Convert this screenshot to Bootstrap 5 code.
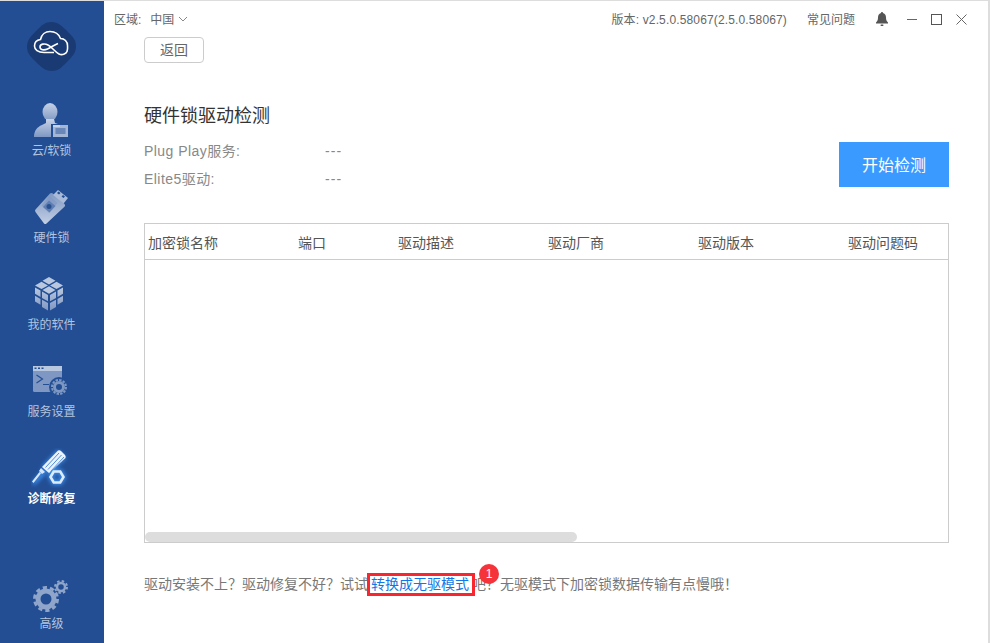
<!DOCTYPE html>
<html lang="zh">
<head>
<meta charset="utf-8">
<title>诊断修复</title>
<link rel="stylesheet" href="https://cdn.jsdelivr.net/npm/bootstrap@5.3.0/dist/css/bootstrap.min.css">
<style>
html,body{height:643px;overflow:hidden;background:#fff}
body{font-family:"Liberation Sans","Noto Sans CJK SC",sans-serif;font-size:12px;color:#666}
.app-shell{height:643px;border-top:1px solid #ddd;border-right:2px solid #ddd;margin-right:1px}
.side-rail{width:104px;background:#234e94;padding:21px 1px 0 0;height:100%}
.logo-mark{width:49px;height:49px;display:block;margin-bottom:29px}
.rail-item{height:87px;color:#b4c4dd;font-size:12px;line-height:14px}
.rail-item svg{width:40px;height:40px;display:block;margin-bottom:4px}
.rail-item.is-active{color:#fff}
.rail-end{margin-top:auto;height:66px;color:#b4c4dd;line-height:14px}
.rail-end svg{width:38px;height:38px;display:block;margin-bottom:2px}
.main-pane{min-width:0;position:relative}
.top-strip{height:36px;padding:0 21px 0 10px;font-size:12px;line-height:36px}
.top-strip svg{display:block}
.top-strip span{padding-top:2px}
.region-name{margin-left:9px}
.build-info{letter-spacing:.14px}
.gap-faq,.gap-bell{margin-left:20px}
.gap-min{margin-left:18px}
.gap-win{margin-left:14px}
.pane-body{padding:0 39px 0 40px}
.back-btn{width:60px;height:26px;padding:0;border:1px solid #ccc;border-radius:4px;color:#666;font-size:14px;line-height:24px;background:#fff}
.pane-title{font-size:18px;line-height:24px;color:#333;font-weight:400;margin:41px 0 0}
.stat-row{font-size:14px;line-height:28px;color:#888;letter-spacing:.45px}
.stat-label{width:181px}
.stat-dash{letter-spacing:1.1px}
.start-btn{width:110px;height:45px;background:#3b9aff;color:#fff;font-size:16px;border:0;border-radius:0;padding:2px 0 0;margin-top:14px}
.start-btn:hover{background:#3b9aff;color:#fff}
.stat-block{padding-top:9px}
.result-grid{height:320px;border:1px solid #ccc;margin-top:30px;position:relative}
.grid-head{height:36px;border-bottom:1px solid #ccc;padding-left:3px;font-size:14px;line-height:38px;color:#555}
.head-cell{width:150px;flex:none}
.head-cell.narrow{width:100px}
.grid-thumb{position:absolute;left:0;bottom:0;width:432px;height:10px;background:#ddd;border-radius:5px}
.foot-note{font-size:14px;line-height:20px;color:#777;margin-top:31px;white-space:nowrap;position:relative}
.foot-link{color:#0f78e6;text-decoration:none;position:relative;display:inline-block;margin:0 3px;background:#fff}
.foot-link::after{content:"";position:absolute;left:-4px;right:-6px;top:-1px;bottom:-2px;border:3px solid #f8262e}
.foot-badge{position:absolute;left:335px;top:-10px;width:20px;height:20px;border-radius:50%;background:#f5333a;color:#fff;font-size:12px;line-height:20px;text-align:center}
</style>
</head>
<body>
<div class="app-shell d-flex">
  <nav class="side-rail d-flex flex-column align-items-center flex-shrink-0">
    <svg class="logo-mark" viewBox="0 0 49 49"><path d="M24.500 0C31 0 35 4 41 10 46 15 49 18 49 24.500 49 31 45 35 39 41 34 46 31 49 24.500 49 18 49 14 45 8 39 3 34 0 31 0 24.500 0 18 4 14 10 8 15 3 18 0 24.500 0z" fill="#1a3a74"/><path d="M27 30.500H17C11 30.500 7.500 27.500 7.500 24 7.500 20.500 10 18 13.500 17.500 14.500 12.500 18.500 9.500 23 9.500 28 9.500 32 12.500 33.500 16.500 37.500 16.500 40.500 19.500 40.500 23.500 40.500 25 41 27 40 29.500 39 32 35 33.500 32 32 28 30 25 25 21 23 17.500 21 13 22 13 25 13 28 17 28.500 20.500 27 24 25.500 27 23 31 21.500" fill="none" stroke="#fff" stroke-width="1.600"/></svg>
    <div class="rail-item d-flex flex-column align-items-center">
      <svg viewBox="0 0 40 40"><defs><linearGradient id="g1" x1="0" y1="0" x2="0" y2="1"><stop offset="0" stop-color="#c6d2e6"/><stop offset="1" stop-color="#7f98c3"/></linearGradient></defs><ellipse cx="18" cy="12" rx="7.500" ry="9" fill="url(#g1)"/><path d="M14 19h8l1 4 6 2v12H2c0-6 3-10 8-12l4-2z" fill="url(#g1)"/><rect x="19" y="24" width="17" height="13" fill="#234e94"/><rect x="21" y="25" width="15" height="12" fill="#a3b6d5"/><path d="M21 25h7v2h-7z" fill="#c6d2e6"/><path d="M23.500 29h10M23.500 31h10M23.500 33h10" stroke="#234e94" stroke-width=".9"/></svg>
      云/软锁
    </div>
    <div class="rail-item d-flex flex-column align-items-center">
      <svg viewBox="0 0 40 40"><defs><linearGradient id="g2" x1="0" y1="0" x2="0" y2="1"><stop offset="0" stop-color="#7f98c3"/><stop offset="1" stop-color="#c2cfe4"/></linearGradient></defs><path d="M3.500 22.500 18 6.500a2 2 0 0 1 2.500-.2L32.500 17a2 2 0 0 1 .2 2.500L14.500 36.500a2 2 0 0 1-2.500 0L3.500 25a2 2 0 0 1 0-2.500z" fill="url(#g2)"/><path d="m21 8 5-5 10 8-4.500 5.500z" fill="#a9bbd8"/><path d="m25 6 1.500-1.500 2 1.500-1.500 1.500zM29.500 9.500l1.500-1.500 2 1.500-1.500 1.500z" fill="#234e94"/><path d="m9.500 18.500 8-9.500 8 7-8.500 10z" fill="#7b95c1" opacity=".55"/><path d="M17 13.500l6.500 5.500-6 6.500-6.500-5.500z" fill="#5f7fb4"/><circle cx="17" cy="19.500" r="2.500" fill="#2b528f"/></svg>
      硬件锁
    </div>
    <div class="rail-item d-flex flex-column align-items-center">
      <svg viewBox="0 0 40 40"><defs><linearGradient id="g3" x1="0" y1="0" x2="0" y2="1"><stop offset="0" stop-color="#b9c8df"/><stop offset="1" stop-color="#7f98c3"/></linearGradient></defs><path fill="#b9c8df" d="M18 3l6.500 3.700L18 10.400l-6.500-3.700zM10.500 7.700l6.500 3.700-6.500 3.700L4 11.400zM25.500 7.700l6.500 3.700-6.500 3.700L19 11.400zM18 12.300l6.500 3.700L18 19.700 11.500 16z"/><path fill="url(#g3)" d="M4 13.500l5.500 3.100v6.300L4 19.800zM11 17.500l6 3.400v6.400l-6-3.400zM19 20.900l6-3.400v6.400l-6 3.400zM26.500 16.600l5.500-3.100v6.300l-5.500 3.100zM4 21.800l5.500 3.100v5.800L4 27.600zM11 25.700l6 3.400v7.400l-6-3.400zM19 29.100l6-3.400v7.400l-6 3.400zM26.500 24.900l5.500-3.100v5.800l-5.500 3.100z"/></svg>
      我的软件
    </div>
    <div class="rail-item d-flex flex-column align-items-center">
      <svg viewBox="0 0 40 40"><rect x="2" y="5" width="29" height="26" rx="1.500" fill="#7f98c3"/><rect x="2" y="5" width="29" height="5" fill="#b9c8df"/><path d="M3.500 6.500h2V8h-2zM7 6.500h2V8H7zM10.500 6.500h2V8h-2z" fill="#234e94"/><path d="m5.500 14 6 4-6 4M12 23.500h6" fill="none" stroke="#234e94" stroke-width="1.200"/><circle cx="28" cy="26" r="10" fill="#234e94"/><circle cx="28" cy="26" r="4.500" fill="none" stroke="#7f98c3" stroke-width="3"/><circle cx="28" cy="26" r="7" fill="none" stroke="#7f98c3" stroke-width="2" stroke-dasharray="2.400 1.260"/></svg>
      服务设置
    </div>
    <div class="rail-item is-active fw-bold d-flex flex-column align-items-center">
      <svg viewBox="0 0 40 40"><defs><filter id="glow" x="-40%" y="-40%" width="180%" height="180%"><feGaussianBlur stdDeviation="2"/></filter></defs><g filter="url(#glow)"><path d="M27 2l8 8-17 15-7-6zM1 35l11-13 3 3L3 37z" fill="#3f9bff"/><path d="M19.500 29l3.250-5.500h6.500L32.500 29l-3.250 5.500h-6.500z" fill="none" stroke="#3f9bff" stroke-width="4"/></g><path d="M27 2.500a3 3 0 0 1 3 .5l4 4a3 3 0 0 1 .5 3L18 25l-7-6z" fill="#eaf3ff"/><path d="M14.500 19.500 28 5M17 21.500 30.500 7M19.500 23.500 33 9" stroke="#4f8fdc" stroke-width="1"/><path d="m10 20 4 4-3 2-3-3zM8.500 24l1.500 1.500L2.500 35 1 33.500z" fill="#d6e7fc"/><path d="M19.500 29l3.250-5.500h6.500L32.500 29l-3.250 5.500h-6.500z" fill="none" stroke="#dcebfd" stroke-width="2.600"/></svg>
      诊断修复
    </div>
    <div class="rail-end d-flex flex-column align-items-center">
      <svg viewBox="0 0 38 38"><circle cx="13" cy="22" r="8" fill="none" stroke="#8fa5c9" stroke-width="5"/><circle cx="13" cy="22" r="11.500" fill="none" stroke="#8fa5c9" stroke-width="3" stroke-dasharray="4.200 3.030"/><circle cx="28" cy="10" r="4" fill="none" stroke="#8fa5c9" stroke-width="2.500"/><circle cx="28" cy="10" r="6" fill="none" stroke="#8fa5c9" stroke-width="2" stroke-dasharray="2.500 2.210"/></svg>
      高级
    </div>
  </nav>
  <main class="main-pane flex-grow-1">
    <div class="top-strip d-flex align-items-center">
      <span>区域:</span><span class="region-name">中国</span>
      <svg class="ms-1" width="10" height="6" viewBox="0 0 10 6"><path d="m1 1 4 4 4-4" fill="none" stroke="#888"/></svg>
      <span class="build-info ms-auto">版本: v2.5.0.58067(2.5.0.58067)</span>
      <span class="gap-faq">常见问题</span>
      <svg class="gap-bell" width="14" height="14" viewBox="0 0 14 14"><path d="M7 0c.7 0 1 .5 1 1 2.200.5 3 2.500 3 4.500 0 2.500.7 3.500 2 5v1H1v-1c1.300-1.500 2-2.500 2-5C3 3.500 3.800 1.500 6 1c0-.5.300-1 1-1z" fill="#555"/><rect x="5.500" y="12.500" width="3" height="1.500" rx=".7" fill="#555"/></svg>
      <svg class="gap-min" width="10" height="11" viewBox="0 0 10 11"><path d="M0 5.500h10" stroke="#666"/></svg>
      <svg class="gap-win" width="11" height="11" viewBox="0 0 11 11"><rect x=".5" y=".5" width="10" height="10" fill="none" stroke="#555"/></svg>
      <svg class="gap-win" width="11" height="11" viewBox="0 0 11 11"><path d="m.5.500 10 10M10.500.5l-10 10" stroke="#666"/></svg>
    </div>
    <div class="pane-body">
      <button type="button" class="btn back-btn">返回</button>
      <h1 class="pane-title">硬件锁驱动检测</h1>
      <div class="d-flex justify-content-between align-items-start">
        <div class="stat-block">
          <div class="stat-row d-flex"><span class="stat-label">Plug Play服务:</span><span class="stat-dash">---</span></div>
          <div class="stat-row d-flex"><span class="stat-label">Elite5驱动:</span><span class="stat-dash">---</span></div>
        </div>
        <button type="button" class="btn start-btn">开始检测</button>
      </div>
      <div class="result-grid">
        <div class="grid-head d-flex">
          <div class="head-cell">加密锁名称</div>
          <div class="head-cell narrow">端口</div>
          <div class="head-cell">驱动描述</div>
          <div class="head-cell">驱动厂商</div>
          <div class="head-cell">驱动版本</div>
          <div class="head-cell">驱动问题码</div>
        </div>
        <div class="grid-thumb"></div>
      </div>
      <p class="foot-note mb-0">驱动安装不上&#xFF1F;驱动修复不好&#xFF1F;试试<a class="foot-link" href="#">转换成无驱模式</a>吧&#xFF1F;无驱模式下加密锁数据传输有点慢哦&#xFF01;<span class="foot-badge">1</span></p>
    </div>
  </main>
</div>
<script src="https://cdn.jsdelivr.net/npm/bootstrap@5.3.0/dist/js/bootstrap.bundle.min.js"></script>
</body>
</html>
